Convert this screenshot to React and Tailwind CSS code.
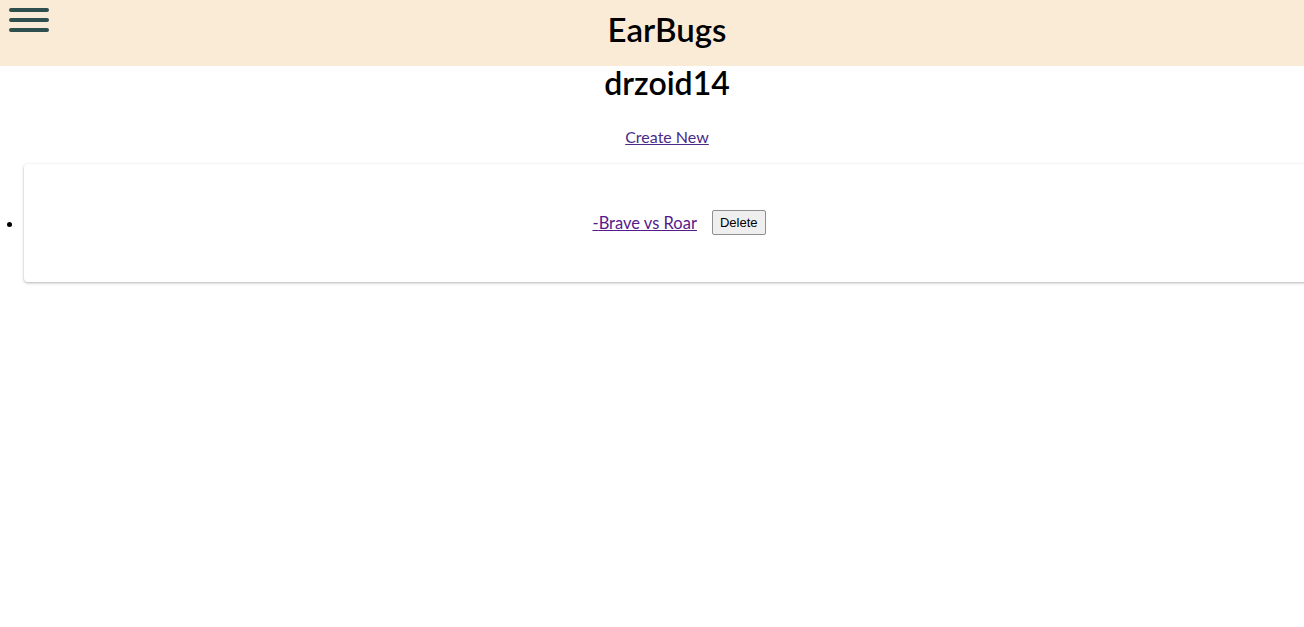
import React from 'react';

function Hamburger() {
  return (
    <div className="flex flex-col gap-[6px] w-[40px]">
      <span className="block h-[4px] w-full rounded-full bg-[#2f4f4f]" />
      <span className="block h-[4px] w-full rounded-full bg-[#2f4f4f]" />
      <span className="block h-[4px] w-full rounded-full bg-[#2f4f4f]" />
    </div>
  );
}

export default function App() {
  const songs = [{ id: 1, title: 'Brave vs Roar' }];

  return (
    <div className="w-full overflow-hidden bg-white" style={{ minHeight: 627 }}>
      <div className="w-[1334px] font-['Lato','Noto_Sans',sans-serif] text-black">
        <header className="relative h-[66px] bg-[#faebd7] flex items-center justify-center">
          <div className="absolute left-[9px] top-[8px]">
            <Hamburger />
          </div>
          <h1 className="text-[33px] font-semibold leading-none mt-[-7px]">EarBugs</h1>
        </header>

        <h2 className="text-center text-[32px] font-semibold leading-[36px] mt-[-1px]">drzoid14</h2>

        <div className="text-center mt-[24px]">
          <a href="#" className="text-[16px] text-[#4b2a8a] underline">Create New</a>
        </div>

        <ul className="list-disc pl-6 mt-[15px]">
          {songs.map((s) => (
            <li key={s.id}>
              <div className="rounded-[4px] bg-white shadow-[0_1px_3px_rgba(0,0,0,0.3)] pt-[46px] pb-[47px] flex items-center justify-center gap-[15px]">
                <a href="#" className="text-[16.5px] leading-[24px] text-[#551a8b] underline">-{s.title}</a>
                <button className="font-['Liberation_Sans',Arial,sans-serif] text-[13px] leading-none px-[7px] py-[5px] border border-[#8f8f8f] rounded-[2px] bg-[#efefef] text-black">
                  Delete
                </button>
              </div>
            </li>
          ))}
        </ul>
      </div>
    </div>
  );
}
